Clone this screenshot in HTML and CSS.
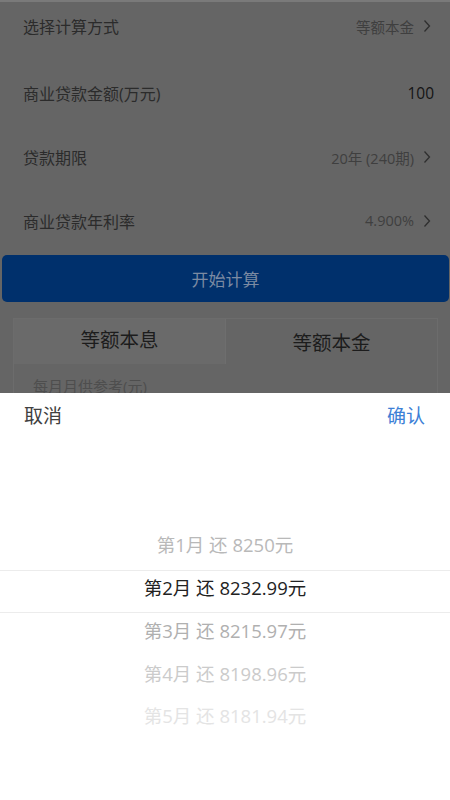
FILE: index.html
```html
<!DOCTYPE html>
<html lang="zh-CN">
<head>
<meta charset="utf-8">
<title>房贷计算器</title>
<link rel="stylesheet" href="styles.css">
</head>
<body>
<div class="page">
  <div class="form">
    <div class="row row-1">
      <span class="label">选择计算方式</span>
      <span class="value">等额本金<svg class="chev" viewBox="0 0 8 14"><path d="M1.5 1.5l5 5.5-5 5.5"/></svg></span>
    </div>
    <div class="row row-2">
      <span class="label">商业贷款金额(万元)</span>
      <span class="value strong">100</span>
    </div>
    <div class="row row-3">
      <span class="label">贷款期限</span>
      <span class="value">20年 (240期)<svg class="chev" viewBox="0 0 8 14"><path d="M1.5 1.5l5 5.5-5 5.5"/></svg></span>
    </div>
    <div class="row row-4">
      <span class="label">商业贷款年利率</span>
      <span class="value">4.900%<svg class="chev" viewBox="0 0 8 14"><path d="M1.5 1.5l5 5.5-5 5.5"/></svg></span>
    </div>
  </div>
  <div class="btn">开始计算</div>
  <div class="card">
    <div class="tabs">
      <div class="tab tab-on">等额本息</div>
      <div class="tab tab-off">等额本金</div>
    </div>
    <div class="card-body">每月月供参考(元)</div>
  </div>
</div>

<div class="sheet">
  <div class="sheet-head">
    <span class="cancel">取消</span>
    <span class="ok">确认</span>
  </div>
  <div class="picker">
    <div class="opt"></div>
    <div class="opt"></div>
    <div class="opt o1">第1月 还 8250元</div>
    <div class="opt sel">第2月 还 8232.99元</div>
    <div class="opt o3">第3月 还 8215.97元</div>
    <div class="opt o4">第4月 还 8198.96元</div>
    <div class="opt o5">第5月 还 8181.94元</div>
  </div>
</div>
</body>
</html>
```
FILE: styles.css
```css
* { box-sizing: border-box; }
html, body { margin: 0; padding: 0; }
body {
  width: 450px;
  height: 800px;
  overflow: hidden;
  background: #656565;
  font-family: "Open Sans", "Noto Sans CJK SC", sans-serif;
}
.page {
  height: 393px;
  overflow: hidden;
  border-top: 2px solid #7a7a7a;
}
.form {
  margin-top: -10px;
}
.row {
  display: flex;
  align-items: center;
  justify-content: space-between;
  padding: 0 16px 0 23px;
}
.row-1 { height: 68px; }
.row-2 { height: 65px; }
.row-3 { height: 64px; }
.row-4 { height: 63px; }
.label {
  font-size: 16px;
  color: #2b2b2b;
}
.value {
  display: flex;
  align-items: center;
  font-size: 14.5px;
  color: #3f3f3f;
}
.value.strong {
  font-size: 15.5px;
  color: #141414;
}
.chev {
  width: 8px;
  height: 14px;
  margin: 0 3px 0 9px;
  fill: none;
  stroke: #2f2f2f;
  stroke-width: 1.3;
}
.btn {
  margin: 3px 1px 0 2px;
  height: 47px;
  border-radius: 5px;
  background: #00306c;
  color: #7b8aa2;
  font-size: 17px;
  display: flex;
  align-items: center;
  justify-content: center;
}
.card {
  margin: 16px 12px 0 13px;
  border: 1px solid #6c6c6c;
  border-bottom: none;
  height: 100px;
}
.tabs {
  display: flex;
  height: 45px;
}
.tab {
  flex: 1;
  display: flex;
  align-items: center;
  justify-content: center;
  font-size: 19.5px;
  color: #1c1c1c;
}
.tab-on {
  background: #6a6a6a;
  border-right: 1px solid #6e6e6e;
  padding-bottom: 7px;
}
.tab-off {
  background: #656565;
  padding-bottom: 1px;
}
.card-body {
  padding: 11px 0 0 19px;
  font-size: 15px;
  color: #4e4e4e;
}
.sheet {
  position: fixed;
  left: 0;
  right: 0;
  top: 393px;
  bottom: 0;
  background: #fff;
}
.sheet-head {
  height: 48px;
  display: flex;
  align-items: center;
  justify-content: space-between;
  padding: 0 25px 4px 24px;
}
.cancel {
  font-size: 19px;
  color: #404040;
}
.ok {
  font-size: 19px;
  color: #3c80d6;
}
.picker {
  display: flex;
  flex-direction: column;
}
.opt {
  height: 43px;
  display: flex;
  align-items: center;
  justify-content: center;
  font-size: 18.5px;
  color: #b4b4b4;
}
.opt.sel {
  color: #222;
  border-top: 1px solid #ececec;
  border-bottom: 1px solid #ececec;
  padding-bottom: 10px;
}
.opt.o1 { color: #b9b9b9; padding-bottom: 9px; }
.opt.o3 { color: #b0b0b0; padding-bottom: 9px; }
.opt.o4 { color: #cbcbcb; padding-bottom: 10px; }
.opt.o5 { color: #e4e4e4; padding-bottom: 11px; }
```
